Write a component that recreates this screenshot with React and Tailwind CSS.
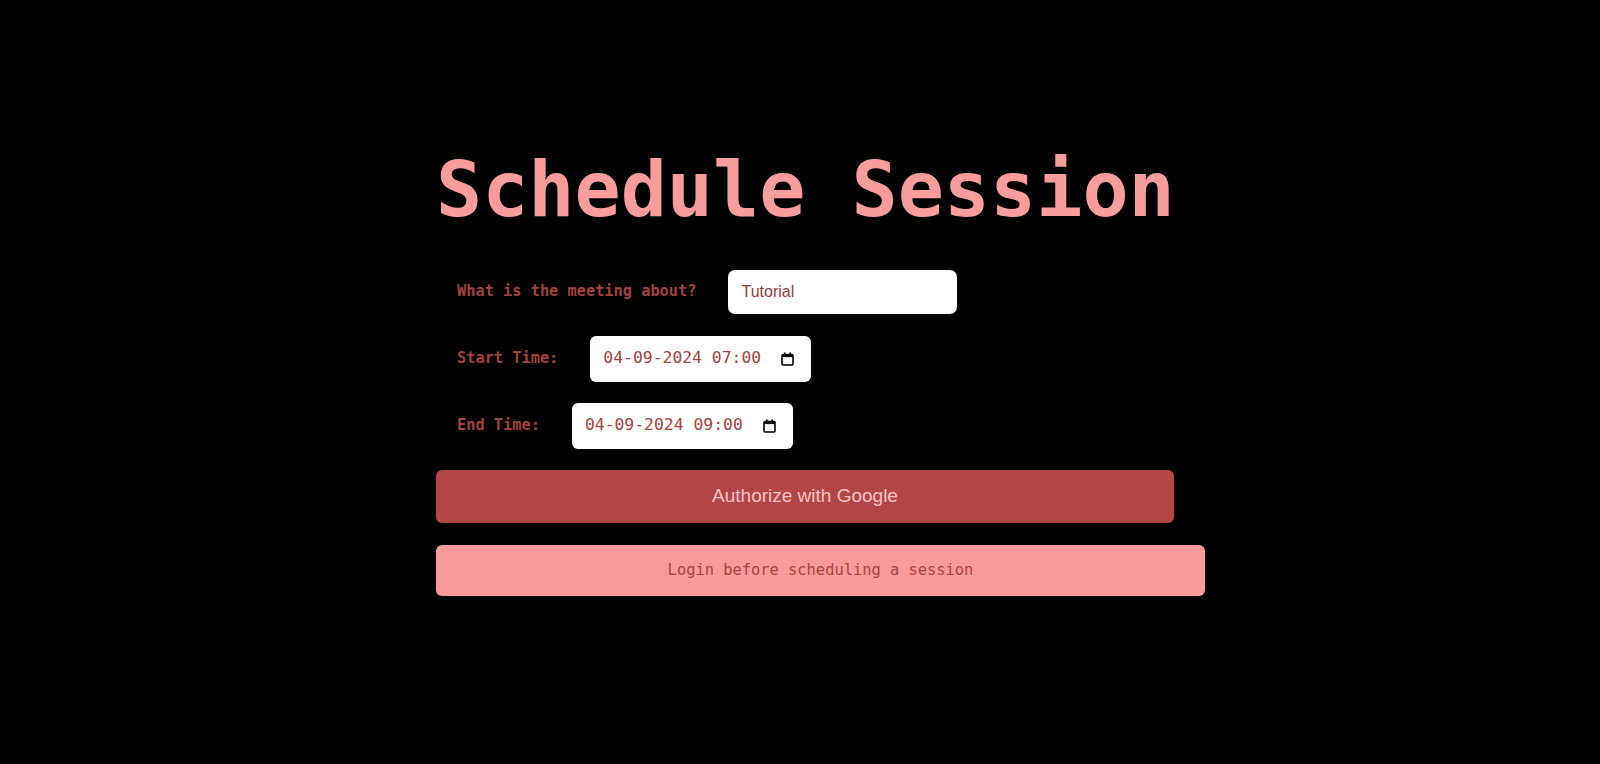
import React from "react";

function CalendarIcon() {
  return (
    <svg width="13" height="14" viewBox="0 0 13 14" className="shrink-0">
      <rect x="1" y="2.5" width="11" height="10.5" rx="1" fill="none" stroke="#000" strokeWidth="1.6" />
      <rect x="1" y="2.5" width="11" height="2.6" fill="#000" />
      <rect x="3" y="0.5" width="1.6" height="2.5" fill="#000" />
      <rect x="8.4" y="0.5" width="1.6" height="2.5" fill="#000" />
    </svg>
  );
}

function DateField({ value }) {
  return (
    <div className="flex h-[46px] w-[221px] shrink-0 items-center justify-between rounded-[6px] bg-white pl-[13px] pr-[17px] font-['DejaVu_Sans_Mono',monospace] text-[16.4px] text-[#a6423e]">
      <span className="whitespace-nowrap">{value}</span>
      <CalendarIcon />
    </div>
  );
}

function Label({ children }) {
  return (
    <label className="whitespace-nowrap font-['DejaVu_Sans_Mono',monospace] text-[15.3px] font-bold text-[#a4423e]">
      {children}
    </label>
  );
}

export default function App() {
  return (
    <div className="min-h-[764px] w-full bg-black">
      <div className="mx-auto flex w-[728px] flex-col items-start pt-[152px]">
        <h1 className="w-[738px] shrink-0 whitespace-nowrap text-center font-['DejaVu_Sans_Mono',monospace] text-[76.7px] font-bold leading-none text-[#f99c9c]">
          Schedule Session
        </h1>

        <div className="mt-[41px] flex flex-col">
          <div className="flex items-center gap-[32px] pl-[21px]">
            <Label>What is the meeting about?</Label>
            <div className="flex h-[44px] w-[229px] items-center rounded-[7px] bg-white pl-[13px] font-['Liberation_Sans',Arial,sans-serif] text-[16px] text-[#8e3e3e]">
              Tutorial
            </div>
          </div>

          <div className="mt-[22px] flex items-center gap-[32px] pl-[21px]">
            <Label>Start Time:</Label>
            <DateField value="04-09-2024 07:00" />
          </div>

          <div className="mt-[21px] flex items-center gap-[32px] pl-[21px]">
            <Label>End Time:</Label>
            <DateField value="04-09-2024 09:00" />
          </div>
        </div>

        <button className="mt-[21px] flex h-[53px] w-[738px] shrink-0 items-center justify-center rounded-[6px] bg-[#b24646] font-['Liberation_Sans',Arial,sans-serif] text-[19px] text-[#f9c4c4]">
          Authorize with Google
        </button>

        <div className="mt-[22px] flex h-[51px] w-[769px] shrink-0 items-center justify-center rounded-[6px] bg-[#f99a9a] font-['DejaVu_Sans_Mono',monospace] text-[15.4px] text-[#a8443f]">
          Login before scheduling a session
        </div>
      </div>
    </div>
  );
}
